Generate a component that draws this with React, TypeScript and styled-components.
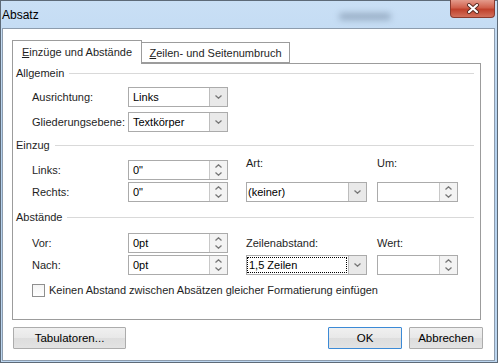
import styled, { createGlobalStyle } from "styled-components";

const GlobalStyle = createGlobalStyle`
  html, body {
    margin: 0;
    padding: 0;
    background: #ffffff;
  }
  body {
    font-family: "Liberation Sans", Arial, sans-serif;
    font-size: 11px;
    color: #1e1e1e;
  }
`;

const Window = styled.div`
  width: 498px;
  height: 363px;
  box-sizing: border-box;
  border: 1px solid #5d6a78;
  background: linear-gradient(180deg, #c9dff5 0%, #b4d1ee 40%, #bcd6f0 100%);
  display: flex;
  flex-direction: column;
`;

const TitleBar = styled.div`
  height: 27px;
  display: flex;
  align-items: center;
  padding-left: 1px;
  flex-shrink: 0;
`;

const Title = styled.span`
  font-size: 12px;
  color: #000;
`;

const GlassSmudge = styled.div`
  margin-left: auto;
  margin-right: 59px;
  width: 52px;
  height: 7px;
  margin-top: 4px;
  border-radius: 4px;
  background: rgba(95, 115, 140, 0.45);
  filter: blur(3px);
`;

const CloseButton = styled.div`
  align-self: flex-start;
  margin-top: -1px;
  margin-right: 2px;
  width: 45px;
  height: 18px;
  box-sizing: border-box;
  border: 1px solid #8a3a2e;
  border-top: none;
  border-radius: 0 0 4px 4px;
  background: linear-gradient(180deg, #e49b8c 0%, #d0604c 45%, #c0412c 55%, #d2705c 100%);
  display: flex;
  align-items: center;
  justify-content: center;
`;

const Client = styled.div`
  flex: 1;
  margin: 0 2px 1px 1px;
  background: #ffffff;
  border: 1px solid #8d9cad;
  display: flex;
  flex-direction: column;
  padding: 11px 11px 0 9px;
`;

const TabRow = styled.div`
  display: flex;
  align-items: flex-end;
  height: 23px;
`;

const Tab = styled.div<{ $active?: boolean }>`
  box-sizing: border-box;
  height: ${(p) => (p.$active ? "24px" : "21px")};
  width: ${(p) => (p.$active ? "130px" : "148px")};
  margin-bottom: ${(p) => (p.$active ? "-1px" : "0")};
  border: 1px solid #9c9c9c;
  border-bottom: ${(p) => (p.$active ? "none" : "1px solid #9c9c9c")};
  border-left: ${(p) => (p.$active ? "1px solid #9c9c9c" : "none")};
  background: #ffffff;
  position: relative;
  z-index: ${(p) => (p.$active ? 2 : 1)};
  display: flex;
  align-items: center;
  justify-content: center;
  padding-bottom: ${(p) => (p.$active ? "2px" : "0")};
`;

const Key = styled.span`
  text-decoration: underline;
`;

const Panel = styled.div`
  box-sizing: border-box;
  width: 469px;
  height: 257px;
  border: 1px solid #9c9c9c;
  display: flex;
  flex-direction: column;
  padding: 1px 6px 0 0;
`;

const SectionHead = styled.div<{ $top: number }>`
  display: flex;
  align-items: center;
  height: 16px;
  padding-left: 3px;
  margin-top: ${(p) => p.$top}px;
`;

const HeadLine = styled.div`
  flex: 1;
  height: 1px;
  background: #d9d9d9;
  margin-left: 5px;
`;

const Grid = styled.div<{ $top: number; $gap: number }>`
  display: grid;
  grid-template-columns: 96px 118px 131px 81px;
  grid-auto-rows: 20px;
  row-gap: ${(p) => p.$gap}px;
  margin-top: ${(p) => p.$top}px;
  padding-left: 19px;
`;

const Label = styled.div<{ $raise?: boolean }>`
  display: flex;
  align-items: center;
  align-self: ${(p) => (p.$raise ? "start" : "center")};
  margin-top: ${(p) => (p.$raise ? "-4px" : "0")};
  height: 14px;
  white-space: nowrap;
`;

const FieldBox = styled.div<{ $w: number }>`
  box-sizing: border-box;
  width: ${(p) => p.$w}px;
  height: 20px;
  border: 1px solid #ababab;
  background: #ffffff;
  display: flex;
`;

const FieldText = styled.div<{ $pad: number }>`
  flex: 1;
  display: flex;
  align-items: center;
  padding-left: ${(p) => p.$pad}px;
  color: #000;
  white-space: nowrap;
`;

const FocusText = styled.div`
  flex: 1;
  margin: 1px 1px 1px 0;
  border: 1px dotted #000;
  display: flex;
  align-items: center;
  padding-left: 1px;
  color: #000;
`;

const DropButton = styled.div`
  width: 17px;
  border-left: 1px solid #bdbdbd;
  background: #e9e9e9;
  display: flex;
  align-items: center;
  justify-content: center;
`;

const SpinButton = styled.div`
  width: 17px;
  border-left: 1px solid #c8c8c8;
  background: #f3f3f3;
  display: flex;
  flex-direction: column;
  align-items: center;
  justify-content: center;
  gap: 4px;
`;

const CheckRow = styled.div`
  display: flex;
  align-items: center;
  gap: 4px;
  margin-top: 8px;
  padding-left: 19px;
  height: 14px;
`;

const CheckBox = styled.div`
  box-sizing: border-box;
  width: 13px;
  height: 13px;
  border: 1px solid #8f8f8f;
  background: linear-gradient(180deg, #f4f4f4, #ffffff);
`;

const ButtonRow = styled.div`
  display: flex;
  gap: 7px;
  margin-top: 7px;
  padding-left: 1px;
`;

const Button = styled.div<{ $w: number; $default?: boolean }>`
  box-sizing: border-box;
  width: ${(p) => p.$w}px;
  height: 22px;
  border: 1px solid ${(p) => (p.$default ? "#3c8ad6" : "#acacac")};
  border-radius: 1px;
  background: linear-gradient(180deg, #f0f0f0 0%, #e8e8e8 50%, #dddddd 51%, #e3e3e3 100%);
  display: flex;
  align-items: center;
  justify-content: center;
  color: #000;
  font-size: 11.5px;
`;

const Spacer = styled.div`
  flex: 1;
`;

function Chevron({ up }: { up?: boolean }) {
  return (
    <svg width="7" height="4" viewBox="0 0 7 4">
      <polyline
        points={up ? "0.5,3.5 3.5,0.8 6.5,3.5" : "0.5,0.5 3.5,3.2 6.5,0.5"}
        fill="none"
        stroke="#777"
        strokeWidth="1.3"
      />
    </svg>
  );
}

function Combo({ w, value, pad = 4, focus }: { w: number; value: string; pad?: number; focus?: boolean }) {
  return (
    <FieldBox $w={w}>
      {focus ? <FocusText>{value}</FocusText> : <FieldText $pad={pad}>{value}</FieldText>}
      <DropButton>
        <Chevron />
      </DropButton>
    </FieldBox>
  );
}

function Spinner({ w, value }: { w: number; value: string }) {
  return (
    <FieldBox $w={w}>
      <FieldText $pad={4}>{value}</FieldText>
      <SpinButton>
        <Chevron up />
        <Chevron />
      </SpinButton>
    </FieldBox>
  );
}

function CloseGlyph() {
  return (
    <svg width="14" height="11" viewBox="0 0 14 11">
      <path d="M3 2 L11 9 M11 2 L3 9" stroke="#5a2a22" strokeWidth="4" strokeLinecap="round" />
      <path d="M3 2 L11 9 M11 2 L3 9" stroke="#ffffff" strokeWidth="2.2" strokeLinecap="round" />
    </svg>
  );
}

export default function App() {
  return (
    <>
      <GlobalStyle />
      <Window>
        <TitleBar>
          <Title>Absatz</Title>
          <GlassSmudge />
          <CloseButton>
            <CloseGlyph />
          </CloseButton>
        </TitleBar>
        <Client>
          <TabRow>
            <Tab $active>
              <span>
                <Key>E</Key>inzüge und Abstände
              </span>
            </Tab>
            <Tab>
              <span>
                <Key>Z</Key>eilen- und Seitenumbruch
              </span>
            </Tab>
          </TabRow>
          <Panel>
            <SectionHead $top={0}>
              Allgemein
              <HeadLine />
            </SectionHead>
            <Grid $top={6} $gap={5}>
              <Label>Ausrichtung:</Label>
              <Combo w={100} value="Links" />
              <div />
              <div />
              <Label>Gliederungsebene:</Label>
              <Combo w={100} value="Textkörper" />
            </Grid>

            <SectionHead $top={5}>
              Einzug
              <HeadLine />
            </SectionHead>
            <Grid $top={7} $gap={2}>
              <Label>Links:</Label>
              <Spinner w={100} value={'0"'} />
              <Label $raise>Art:</Label>
              <Label $raise>Um:</Label>
              <Label>Rechts:</Label>
              <Spinner w={100} value={'0"'} />
              <Combo w={121} value="(keiner)" pad={1} />
              <Spinner w={81} value="" />
            </Grid>

            <SectionHead $top={7}>
              Abstände
              <HeadLine />
            </SectionHead>
            <Grid $top={8} $gap={2}>
              <Label>Vor:</Label>
              <Spinner w={100} value="0pt" />
              <Label>Zeilenabstand:</Label>
              <Label>Wert:</Label>
              <Label>Nach:</Label>
              <Spinner w={100} value="0pt" />
              <Combo w={121} value="1,5 Zeilen" focus />
              <Spinner w={81} value="" />
            </Grid>
            <CheckRow>
              <CheckBox />
              <span>Keinen Abstand zwischen Absätzen gleicher Formatierung einfügen</span>
            </CheckRow>
          </Panel>
          <ButtonRow>
            <Button $w={113}>Tabulatoren...</Button>
            <Spacer />
            <Button $w={74} $default>
              OK
            </Button>
            <Button $w={74}>Abbrechen</Button>
          </ButtonRow>
        </Client>
      </Window>
    </>
  );
}
